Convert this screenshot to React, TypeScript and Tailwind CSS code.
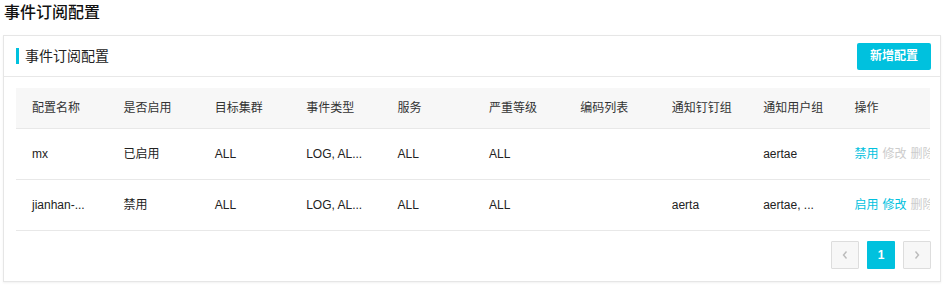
import React from "react";

const cols = ["配置名称", "是否启用", "目标集群", "事件类型", "服务", "严重等级", "编码列表", "通知钉钉组", "通知用户组", "操作"];

const rows = [
  { name: "mx", on: "已启用", cluster: "ALL", type: "LOG, AL...", svc: "ALL", level: "ALL", codes: "", ding: "", users: "aertae", toggle: "禁用", active: false },
  { name: "jianhan-...", on: "禁用", cluster: "ALL", type: "LOG, AL...", svc: "ALL", level: "ALL", codes: "", ding: "aerta", users: "aertae, ...", toggle: "启用", active: true },
];

export default function App() {
  return (
    <div
      className="w-[947px] h-[285px] bg-white text-[#333] overflow-hidden"
      style={{ fontFamily: '"Liberation Sans", "Noto Sans CJK SC", sans-serif' }}
    >
      {/* 页面标题 */}
      <h1 className="px-[4px] pt-[2px] h-[35px] text-[16px] leading-[22px] font-medium text-[#111]">事件订阅配置</h1>

      <div className="mx-[3px] w-[938px] border border-[#e6e6e6] shadow-[0_1px_2px_rgba(0,0,0,0.06)] bg-white">
        {/* 卡片头部 */}
        <div className="h-[41px] flex items-center justify-between pl-[12px] pr-[9px] border-b border-[#e8e8e8]">
          <div className="flex items-center">
            <span className="w-[3px] h-[16px] bg-[#00c1de] mr-[6px]" />
            <span className="text-[14px] text-[#222]">事件订阅配置</span>
          </div>
          <button className="w-[74px] h-[27px] bg-[#00c1de] text-white text-[12px] font-bold rounded-[2px]">新增配置</button>
        </div>

        {/* 表格 */}
        <div className="px-[12px] pt-[11px]">
          <table className="w-[914px] table-fixed border-collapse text-[12px]">
            <thead>
              <tr className="bg-[#f7f7f7] h-[40px]">
                {cols.map((c) => (
                  <th key={c} className="pl-[16px] text-left font-normal text-[#333] border-b border-[#e8e8e8]">{c}</th>
                ))}
              </tr>
            </thead>
            <tbody>
              {rows.map((r) => (
                <tr key={r.name} className="h-[51px] border-b border-[#e8e8e8]">
                  {[r.name, r.on, r.cluster, r.type, r.svc, r.level, r.codes, r.ding, r.users].map((v, i) => (
                    <td key={i} className="pl-[16px] whitespace-nowrap text-[#222]">{v}</td>
                  ))}
                  <td className="pl-[16px] overflow-hidden whitespace-nowrap">
                    <span className="text-[#00c1de] mr-[4px]">{r.toggle}</span>
                    <span className={r.active ? "text-[#00c1de] mr-[4px]" : "text-[#cccccc] mr-[4px]"}>修改</span>
                    <span className="text-[#cccccc]">删除</span>
                  </td>
                </tr>
              ))}
            </tbody>
          </table>
        </div>

        {/* 分页 */}
        <div className="flex justify-end gap-[8px] pr-[9px] pt-[10px] pb-[12px]">
          <button className="w-[28px] h-[28px] border border-[#dddddd] bg-[#f7f7f7] text-[#bbbbbb] rounded-[1px] flex items-center justify-center">
            <svg width="8" height="10" viewBox="0 0 8 10" fill="none" stroke="currentColor" strokeWidth="1.4">
              <path d="M5.5 1.5 2.5 5l3 3.5" />
            </svg>
          </button>
          <button className="w-[28px] h-[28px] bg-[#00c1de] text-white text-[12px] font-bold rounded-[1px]">1</button>
          <button className="w-[28px] h-[28px] border border-[#dddddd] bg-[#f7f7f7] text-[#bbbbbb] rounded-[1px] flex items-center justify-center">
            <svg width="8" height="10" viewBox="0 0 8 10" fill="none" stroke="currentColor" strokeWidth="1.4">
              <path d="M2.5 1.5 5.5 5l-3 3.5" />
            </svg>
          </button>
        </div>
      </div>
    </div>
  );
}
